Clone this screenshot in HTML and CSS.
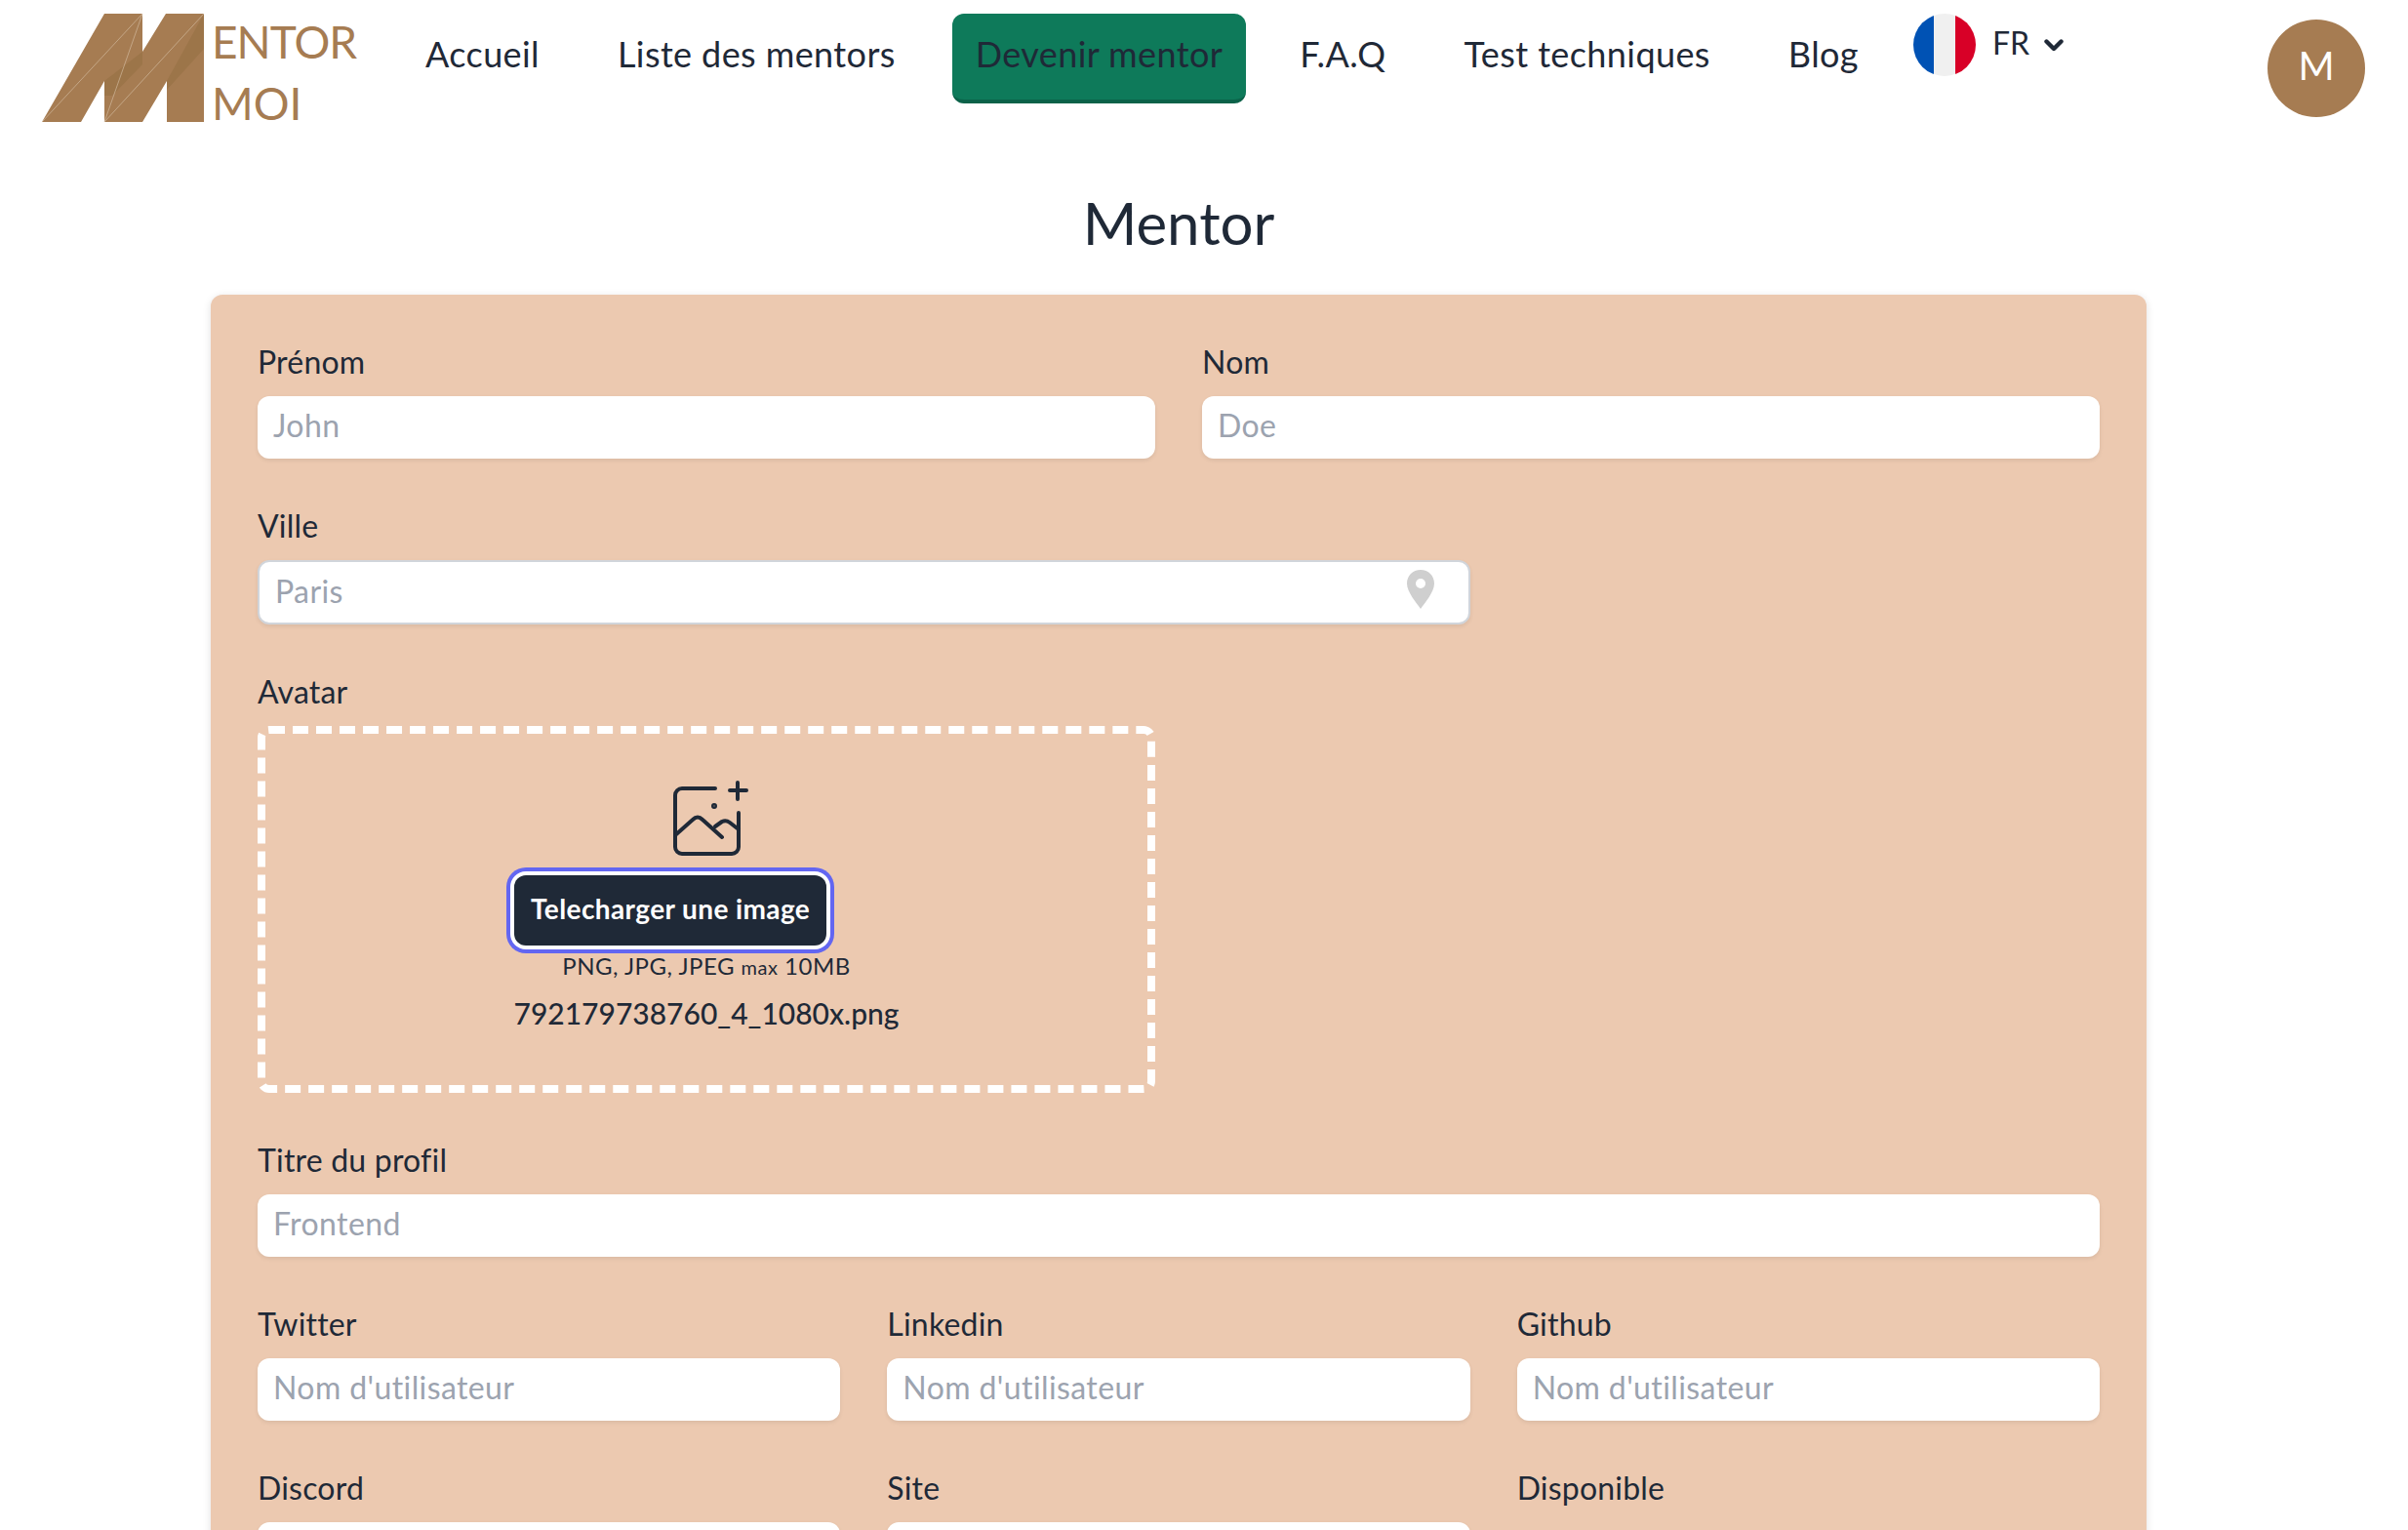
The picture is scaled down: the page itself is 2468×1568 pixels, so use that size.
FILE: index.html
```html
<!DOCTYPE html>
<html lang="fr">
<head>
  <meta charset="UTF-8">
  <title>Mentor Moi</title>
  <meta name="viewport" content="width=device-width, initial-scale=1.0">
  <link rel="stylesheet" href="styles.css">
</head>
<body>

  <header class="topbar">
    <a class="logo" href="#">
      <svg class="logo-mark" width="166" height="111" viewBox="43 14 166 111">
        <polygon fill="#a67c52" points="107,14 146,14 146,53 170,14 209,14 209,125 171,125 171,83 146,125 107,125 107,83 83,125 43,125"/>
        <polygon fill="#9c7549" points="146,53 146,66 115,98 107,98 107,83"/>
        <polygon fill="#9c7549" points="209,14 209,50 171,92 171,83"/>
        <g stroke="#d9c3aa" stroke-width="0.6">
          <line x1="43" y1="125" x2="146" y2="14"/>
          <line x1="107" y1="125" x2="146" y2="14"/>
          <line x1="107" y1="125" x2="209" y2="14"/>
        </g>
      </svg>
      <span class="logo-text"><span class="logo-top">ENTOR</span><span>MOI</span></span>
    </a>

    <nav class="menu">
      <a href="#">Accueil</a>
      <a href="#">Liste des mentors</a>
      <a class="menu-active" href="#">Devenir mentor</a>
      <a href="#">F.A.Q</a>
      <a href="#">Test techniques</a>
      <a href="#">Blog</a>
    </nav>

    <div class="lang">
      <svg class="flag" width="64" height="64" viewBox="0 0 64 64">
        <rect width="21" height="64" fill="#0052b4"/>
        <rect x="21" width="22" height="64" fill="#f0f0f0"/>
        <rect x="43" width="21" height="64" fill="#d80027"/>
      </svg>
      <span class="lang-code">FR</span>
      <svg class="chevron" width="20" height="13" viewBox="0 0 20 13">
        <path d="M2.5 2.5 L10 10 L17.5 2.5" fill="none" stroke="#1f2937" stroke-width="4.4" stroke-linecap="round" stroke-linejoin="round"/>
      </svg>
    </div>

    <div class="avatar">M</div>
  </header>

  <main class="page">
    <h1>Mentor</h1>

    <form class="card">
      <div class="row row-2">
        <div class="field">
          <label>Prénom</label>
          <input type="text" placeholder="John">
        </div>
        <div class="field">
          <label>Nom</label>
          <input type="text" placeholder="Doe">
        </div>
      </div>

      <div class="row row-3">
        <div class="field span-2">
          <label>Ville</label>
          <div class="city">
            <input type="text" placeholder="Paris">
            <svg class="pin" width="28" height="40" viewBox="0 0 28 40">
              <path fill="#cfcfcf" fill-rule="evenodd" d="M14 0C6 0 0 6 0 14c0 9 10 20 14 26 4-6 14-17 14-26C28 6 22 0 14 0Zm0 9a5 5 0 1 1 0 10 5 5 0 0 1 0-10Z"/>
            </svg>
          </div>
        </div>
      </div>

      <div class="row row-2">
        <div class="field">
          <label>Avatar</label>
          <div class="dropzone">
            <svg class="upload-icon" width="78" height="78" viewBox="0 0 78 78" fill="none" stroke="#1f2937" stroke-width="4" stroke-linecap="round" stroke-linejoin="round">
              <path d="M43 8H9a7 7 0 0 0-7 7V68a7 7 0 0 0 7 7H60a7 7 0 0 0 7-7V33"/>
              <path d="M58 10h17M66 2v17"/>
              <path d="M2 56L20 40Q25 35 30 40L50 58"/>
              <path d="M43 47L50 42Q54 40 58 43L67 50"/>
              <circle cx="42" cy="26" r="1" fill="#1f2937"/>
            </svg>
            <div class="upload-block">
              <button class="upload-btn" type="button">Telecharger une image</button>
              <p class="upload-hint">PNG, JPG, JPEG <small>max</small> 10MB</p>
              <p class="upload-file">792179738760_4_1080x.png</p>
            </div>
          </div>
        </div>
      </div>

      <div class="row">
        <div class="field">
          <label>Titre du profil</label>
          <input type="text" placeholder="Frontend">
        </div>
      </div>

      <div class="row row-3">
        <div class="field">
          <label>Twitter</label>
          <input type="text" placeholder="Nom d'utilisateur">
        </div>
        <div class="field">
          <label>Linkedin</label>
          <input type="text" placeholder="Nom d'utilisateur">
        </div>
        <div class="field">
          <label>Github</label>
          <input type="text" placeholder="Nom d'utilisateur">
        </div>
      </div>

      <div class="row row-3">
        <div class="field">
          <label>Discord</label>
          <input type="text" placeholder="Nom d'utilisateur">
        </div>
        <div class="field">
          <label>Site</label>
          <input type="text" placeholder="Nom d'utilisateur">
        </div>
        <div class="field">
          <label>Disponible</label>
        </div>
      </div>
    </form>
  </main>

</body>
</html>
```

FILE: styles.css
```css
:root {
  --text: #1f2937;
  --brown: #a67c52;
  --card: #ecc9b0;
  --placeholder: #9ca3af;
}

* {
  box-sizing: border-box;
}

html, body {
  height: 100%;
  overflow: hidden;
}

body {
  margin: 0;
  font-family: Lato, sans-serif;
  color: var(--text);
  background: #fff;
}

a {
  color: inherit;
  text-decoration: none;
}

/* barre du haut */
.topbar {
  display: flex;
  align-items: flex-start;
  height: 140px;
  padding: 14px 44px 0 43px;
}

.logo {
  display: flex;
  gap: 8px;
  width: 353px;
  flex: none;
}

.logo-mark {
  display: block;
}

.logo-text {
  display: flex;
  flex-direction: column;
  gap: 26px;
  padding-top: 10px;
  color: var(--brown);
  font-size: 46px;
  line-height: 37px;
}

.logo-top {
  letter-spacing: -1px;
}

.menu {
  display: flex;
  align-items: flex-start;
}

.menu a {
  padding: 20px 40px 0;
  font-size: 36px;
  line-height: 42px;
  letter-spacing: 0.4px;
}

.menu a.menu-active {
  height: 92px;
  margin: 0 15px 0 18px;
  padding: 20px 24px 0;
  background: #0e7a5a;
  border-bottom: 4px solid #0b6249;
  border-radius: 12px;
}

.lang {
  display: flex;
  align-items: center;
  gap: 17px;
  margin-left: 16px;
  font-size: 32px;
}

.lang-code {
  margin-bottom: 6px;
}

.flag {
  border-radius: 50%;
  display: block;
}

.chevron {
  margin-left: -2px;
}

.avatar {
  display: flex;
  align-items: center;
  justify-content: center;
  width: 100px;
  height: 100px;
  margin-top: 6px;
  margin-left: auto;
  padding-bottom: 7px;
  border-radius: 50%;
  background: var(--brown);
  color: #fff;
  font-size: 40px;
}

/* formulaire */
.page {
  width: 1984px;
  margin-left: 216px;
}

h1 {
  margin: 0;
  height: 162px;
  padding-top: 53px;
  text-align: center;
  font-size: 60px;
  line-height: 70px;
  font-weight: 400;
}

.card {
  padding: 48px;
  background: var(--card);
  border-radius: 12px;
  box-shadow: 0 2px 8px rgba(0,0,0,0.12);
}

.row {
  display: grid;
  gap: 48px;
  margin-bottom: 48px;
}

.row-2 {
  grid-template-columns: repeat(2, 1fr);
}

.row-3 {
  grid-template-columns: repeat(3, 1fr);
}

.span-2 {
  grid-column: span 2;
}

label {
  display: block;
  height: 56px;
  font-size: 32px;
  line-height: 42px;
  letter-spacing: 0.2px;
}

input {
  display: block;
  width: 100%;
  height: 64px;
  padding: 0 16px 5px;
  font-family: inherit;
  font-size: 32px;
  letter-spacing: 0.4px;
  color: var(--text);
  background: #fff;
  border: none;
  border-radius: 12px;
  box-shadow: 0 2px 4px rgba(0,0,0,0.08);
}

input::placeholder {
  color: var(--placeholder);
  opacity: 1;
}

.city {
  position: relative;
}

.city input {
  height: 66px;
  padding-bottom: 3px;
  border: 2px solid #d1d5db;
}

.pin {
  position: absolute;
  top: 10px;
  right: 37px;
}

.dropzone {
  display: flex;
  flex-direction: column;
  align-items: center;
  height: 376px;
  padding-top: 48px;
  border: 8px dashed #fff;
  border-radius: 12px;
}

.upload-icon {
  display: block;
  margin-left: 10px;
}

.upload-block {
  display: flex;
  flex-direction: column;
  align-items: center;
  width: 394px;
  margin-top: 19px;
}

.upload-btn {
  align-self: flex-start;
  height: 72px;
  padding: 0 17px 4px;
  font-family: inherit;
  font-size: 28px;
  font-weight: 700;
  letter-spacing: 0.4px;
  color: #fff;
  background: var(--text);
  border: none;
  border-radius: 12px;
  box-shadow: 0 0 0 4px #fff, 0 0 0 8px #6366f1;
  white-space: nowrap;
}

.upload-hint {
  margin: 5px 0 0;
  font-size: 24px;
  line-height: 32px;
  letter-spacing: 0.5px;
  white-space: nowrap;
}

.upload-hint small {
  font-size: 20px;
}

.upload-file {
  margin: 9px 0 0;
  font-size: 30px;
  line-height: 44px;
  font-weight: 500;
  white-space: nowrap;
}
```
